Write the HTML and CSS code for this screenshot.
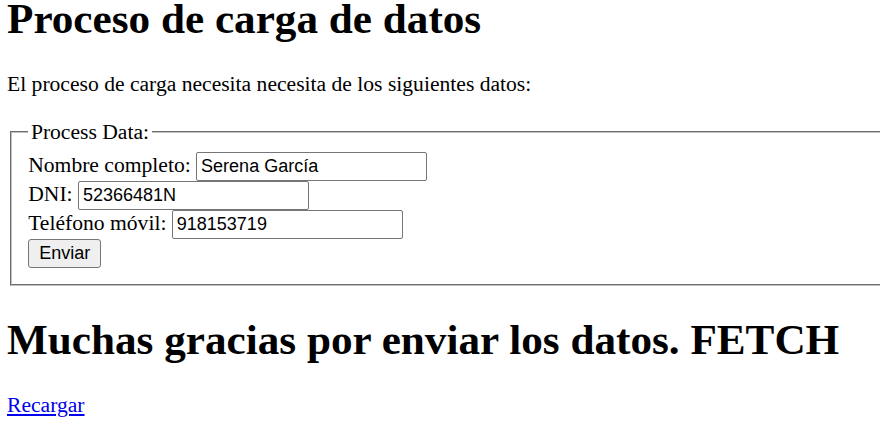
FILE: index.html
```html
<!DOCTYPE html>
<html lang="es">
<head>
<meta charset="utf-8">
<title>Proceso de carga de datos</title>
<link rel="stylesheet" href="styles.css">
</head>
<body>
<h1 class="title first">Proceso de carga de datos</h1>
<p class="intro">El proceso de carga necesita necesita de los siguientes datos:</p>
<form class="form">
  <fieldset class="box">
    <legend class="legend">Process Data:</legend>
    <div class="row"><label class="label" for="nombre">Nombre completo:</label><input class="field" id="nombre" type="text" value="Serena García"></div>
    <div class="row"><label class="label" for="dni">DNI:</label><input class="field" id="dni" type="text" value="52366481N"></div>
    <div class="row"><label class="label" for="tel">Teléfono móvil:</label><input class="field" id="tel" type="text" value="918153719"></div>
    <div class="row"><button class="btn" type="button">Enviar</button></div>
  </fieldset>
</form>
<h1 class="title">Muchas gracias por enviar los datos. FETCH</h1>
<a class="link" href="#">Recargar</a>
</body>
</html>
```
FILE: styles.css
```css
html, body {
  overflow-x: hidden;
}
body {
  margin: 0 8px 0 7px;
  font-family: "Liberation Serif", "Times New Roman", serif;
  font-size: 21.6px;
  color: #000;
  background: #fff;
}
.title {
  font-size: 43.2px;
  font-weight: bold;
  margin: 29px 0;
}
.title.first {
  margin-top: -6px;
}
.intro {
  margin: 0 0 22.6px;
}
.box {
  margin: 0 -60px 0 3px;
  padding: 7.6px 16.2px 15.5px;
  border: 2px groove #c0c0c0;
}
.legend {
  padding: 0 2.7px;
}
.row {
  display: flex;
  align-items: baseline;
  gap: 5.4px;
}
.field {
  box-sizing: border-box;
  width: 231px;
  height: 29px;
  padding: 1px 4px;
  margin: 0;
  border: 1px solid #767676;
  border-radius: 2px;
  font-family: "Liberation Sans", Arial, sans-serif;
  font-size: 18px;
  color: #000;
  background: #fff;
}
.btn {
  box-sizing: border-box;
  width: 73px;
  height: 29px;
  padding: 1px 8px;
  margin: 0;
  border: 1px solid #767676;
  border-radius: 3px;
  background: #efefef;
  font-family: "Liberation Sans", Arial, sans-serif;
  font-size: 18px;
  color: #000;
}
.link {
  color: #0000ee;
  text-decoration: underline;
}
```
